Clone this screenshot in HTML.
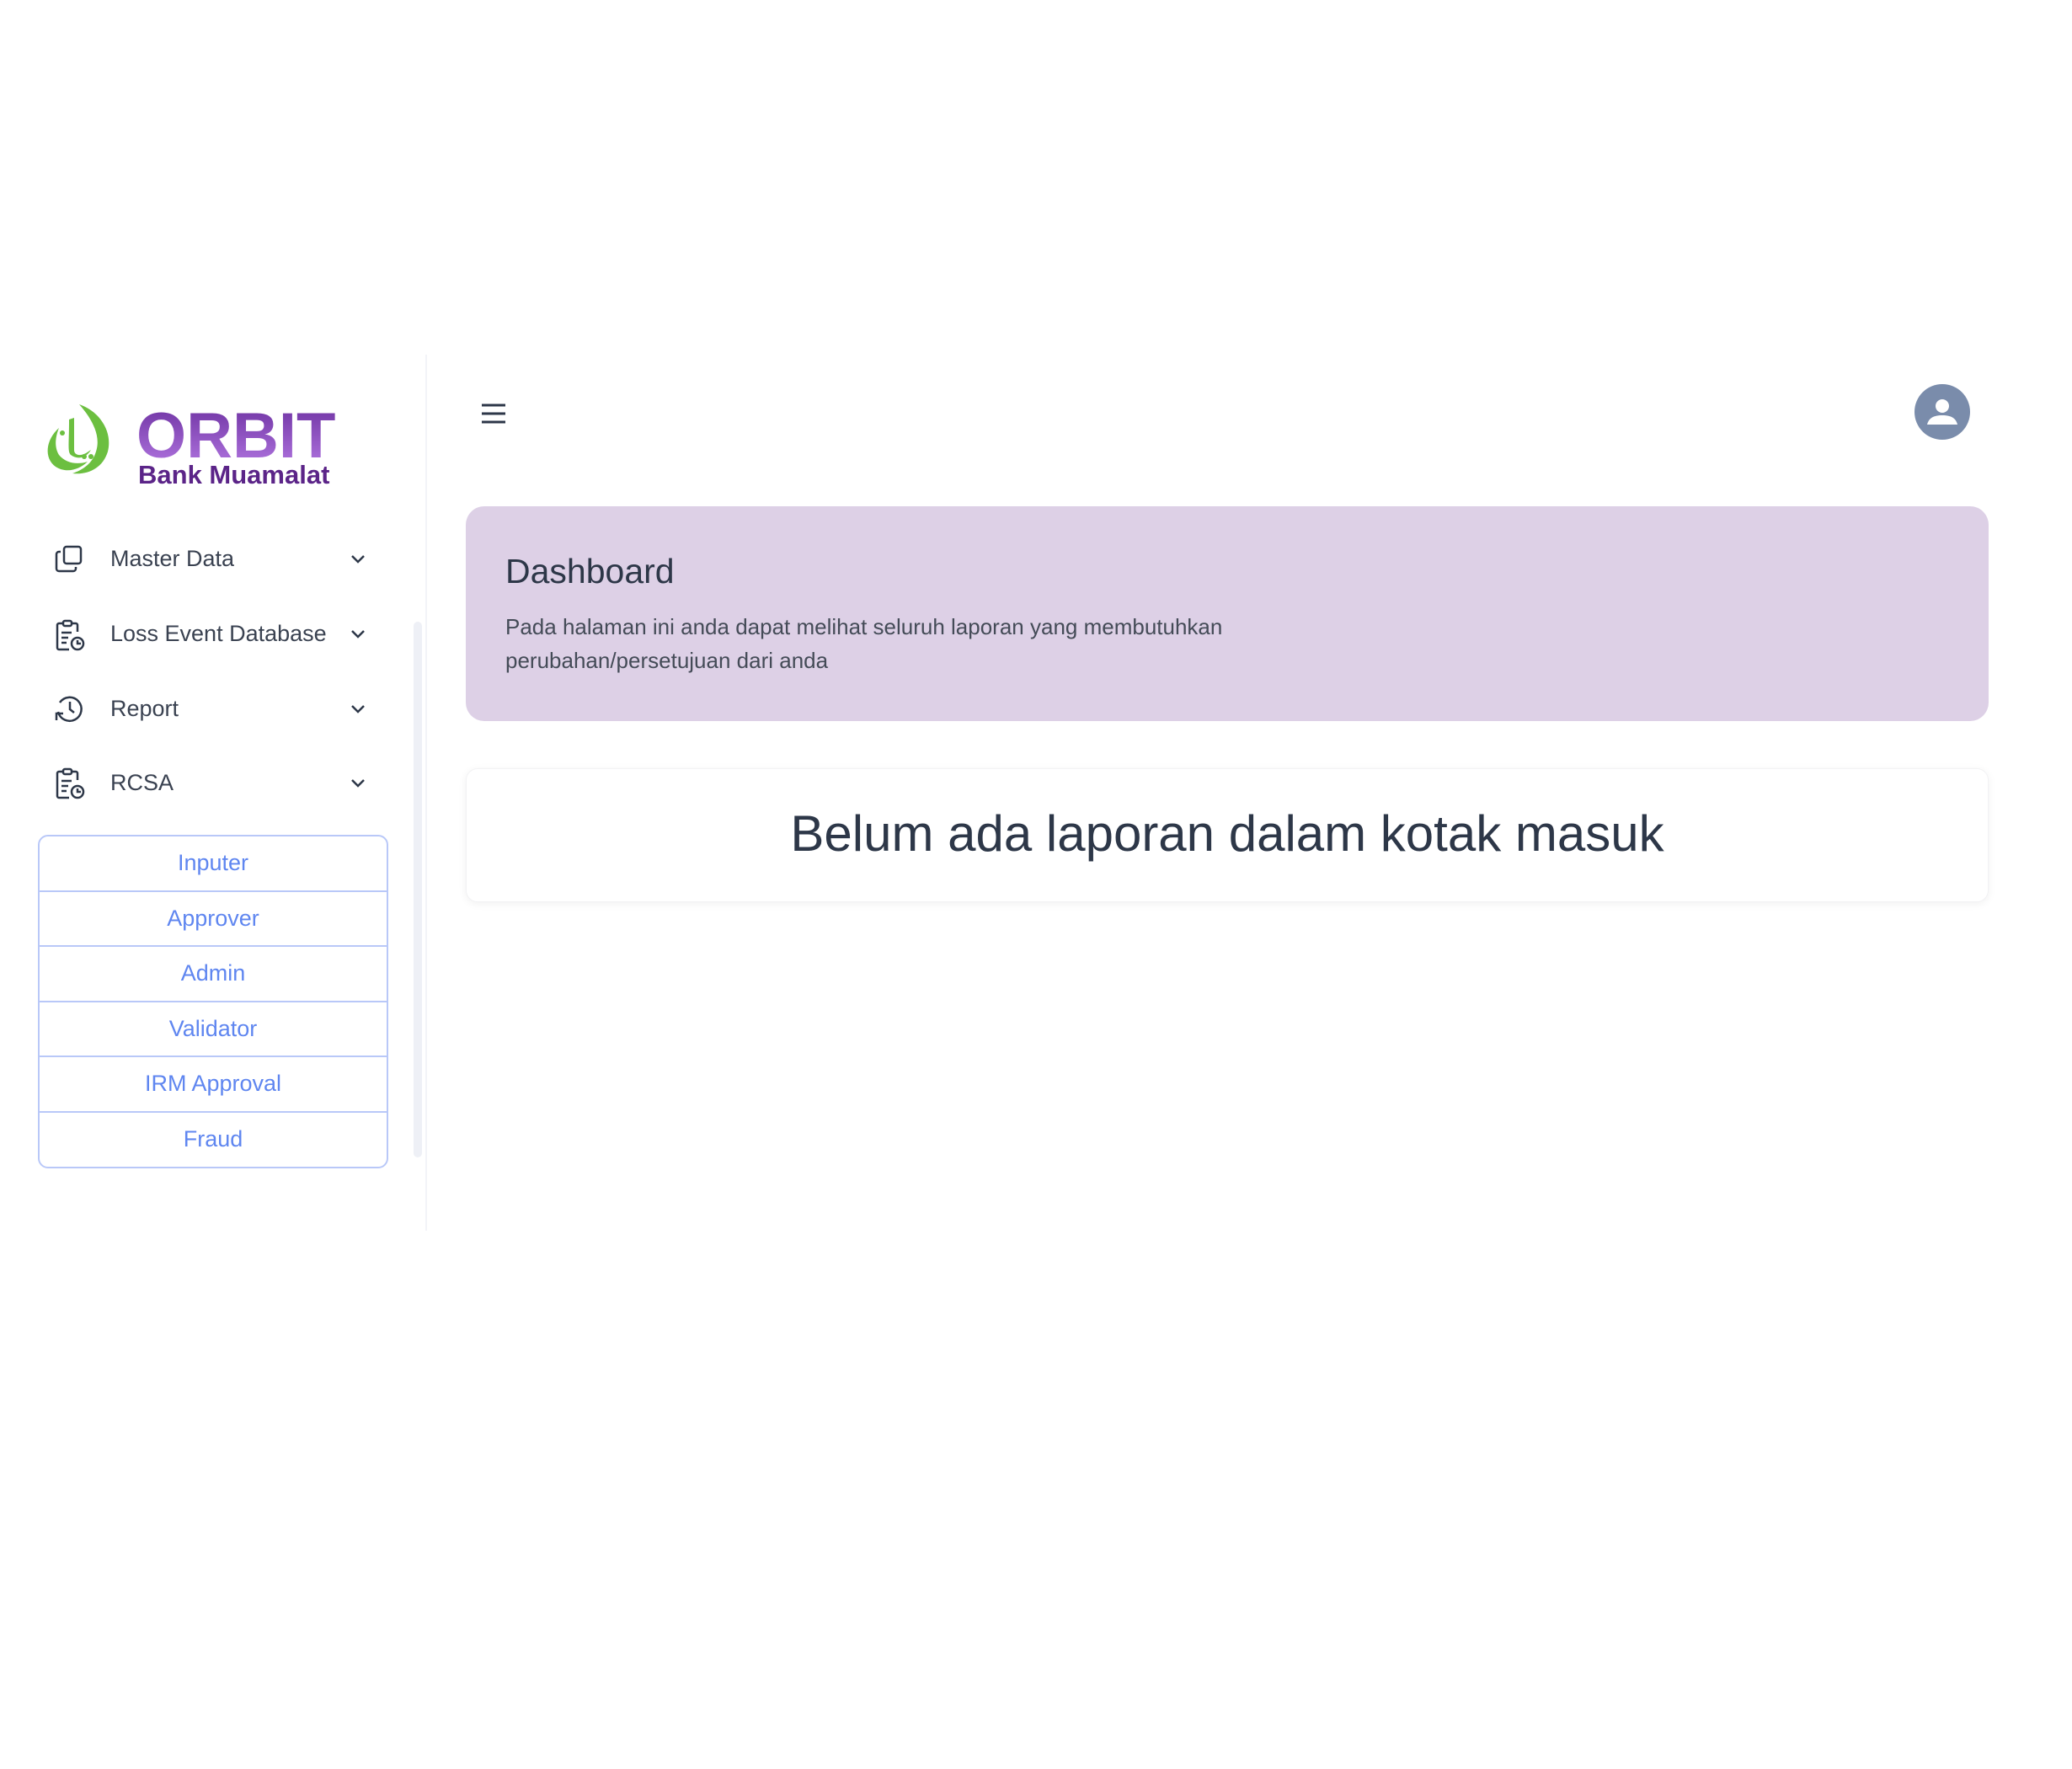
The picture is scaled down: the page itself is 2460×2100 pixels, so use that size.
<!DOCTYPE html>
<html><head><meta charset="utf-8"><style>
*{margin:0;padding:0;box-sizing:border-box}
body{width:2460px;height:2100px;background:#fff;font-family:"Liberation Sans",sans-serif;position:relative;overflow:hidden;color:#2d3748}
.abs{position:absolute}
.side-line{left:505px;top:421px;width:2px;height:1040px;background:#f3f4f8}
.scroll{left:491px;top:738px;width:10px;height:636px;background:#eef0f6;border-radius:5px}
.orbit{left:162px;top:474px;font-size:76px;font-weight:bold;letter-spacing:0px;background:linear-gradient(#6a2e9e,#b57ae4);-webkit-background-clip:text;color:transparent}
.bm{left:164px;top:546px;font-size:31px;font-weight:bold;color:#5b2488}
.mi{left:131px;font-size:27px;color:#3a4251}
.chev{left:414px}
.ico{left:64px}
.list{left:45px;top:991px;width:416px;height:396px;border:2px solid #b9c8f8;border-radius:12px;overflow:hidden}
.list div{height:65.5px;border-bottom:2px solid #b9c8f8;text-align:center;line-height:63px;font-size:27px;color:#5f86f0}
.list div:last-child{border-bottom:none}
.card1{left:553px;top:601px;width:1808px;height:255px;background:#ddd0e6;border-radius:22px}
.card2{left:553px;top:912px;width:1808px;height:159px;background:#fff;border-radius:14px;box-shadow:0 2px 10px rgba(0,0,0,.06);border:1px solid #f2f2f4}
</style></head><body>
<div class="abs side-line"></div>
<div class="abs scroll"></div>
<svg class="abs" style="left:48px;top:478px" width="90" height="88" viewBox="0 0 90 88">
<path d="M46 2 C70 10 86 34 80 58 C74 78 56 86 38 84 C50 80 62 72 66 58 C72 40 62 20 46 2Z" fill="#6cbf40"/>
<path d="M22 30 C6 44 4 66 18 76 C30 84 46 80 56 70 C44 74 30 72 22 62 C16 52 18 40 22 30Z" fill="#6cbf40"/>
<path d="M34 20 L40 18 L40 56 C40 62 46 64 54 60 L60 56 C54 66 44 68 36 62 C32 58 34 50 34 20Z" fill="#6cbf40"/>
<circle cx="26" cy="36" r="3" fill="#6cbf40"/><circle cx="52" cy="64" r="3" fill="#6cbf40"/><circle cx="60" cy="64" r="3" fill="#6cbf40"/>
</svg>
<div class="abs orbit">ORBIT</div>
<div class="abs bm">Bank Muamalat</div>

<svg class="abs ico" style="top:646px" width="36" height="36" viewBox="0 0 36 36" fill="none" stroke="#2d3748" stroke-width="2.5"><rect x="12" y="3" width="20" height="20" rx="3"/><path d="M8 9H6a3 3 0 0 0-3 3v17a3 3 0 0 0 3 3h17a3 3 0 0 0 3-3v-2"/></svg>
<div class="abs mi" style="top:648px">Master Data</div>
<svg class="abs ico" style="top:735px" width="38" height="38" viewBox="0 0 38 38" fill="none" stroke="#2d3748" stroke-width="2.5"><rect x="11" y="2" width="10" height="6" rx="2"/><path d="M11 5H6a2 2 0 0 0-2 2v27a2 2 0 0 0 2 2h12M21 5h5a2 2 0 0 1 2 2v8M9 16h12M9 22h8M9 28h6"/><circle cx="28" cy="29" r="7"/><path d="M28 25v4h4"/></svg>
<div class="abs mi" style="top:737px">Loss Event Database</div>
<svg class="abs ico" style="top:823px" width="38" height="38" viewBox="0 0 38 38" fill="none" stroke="#2d3748" stroke-width="2.5"><path d="M5 22A14 14 0 1 0 7 11"/><path d="M3 32v-8h8"/><path d="M19 10v9l5 4"/></svg>
<div class="abs mi" style="top:826px">Report</div>
<svg class="abs ico" style="top:911px" width="38" height="38" viewBox="0 0 38 38" fill="none" stroke="#2d3748" stroke-width="2.5"><rect x="11" y="2" width="10" height="6" rx="2"/><path d="M11 5H6a2 2 0 0 0-2 2v27a2 2 0 0 0 2 2h12M21 5h5a2 2 0 0 1 2 2v8M9 16h12M9 22h8M9 28h6"/><circle cx="28" cy="29" r="7"/><path d="M28 25v4h4"/></svg>
<div class="abs mi" style="top:914px">RCSA</div>

<svg class="abs chev" style="top:653px" width="22" height="22" viewBox="0 0 22 22" fill="none" stroke="#2d3748" stroke-width="2.5"><path d="M4 7l7 7 7-7"/></svg>
<svg class="abs chev" style="top:742px" width="22" height="22" viewBox="0 0 22 22" fill="none" stroke="#2d3748" stroke-width="2.5"><path d="M4 7l7 7 7-7"/></svg>
<svg class="abs chev" style="top:831px" width="22" height="22" viewBox="0 0 22 22" fill="none" stroke="#2d3748" stroke-width="2.5"><path d="M4 7l7 7 7-7"/></svg>
<svg class="abs chev" style="top:919px" width="22" height="22" viewBox="0 0 22 22" fill="none" stroke="#2d3748" stroke-width="2.5"><path d="M4 7l7 7 7-7"/></svg>

<div class="abs list"><div>Inputer</div><div>Approver</div><div>Admin</div><div>Validator</div><div>IRM Approval</div><div>Fraud</div></div>

<svg class="abs" style="left:570px;top:477px" width="32" height="28" viewBox="0 0 32 28" stroke="#2d3748" stroke-width="3"><path d="M2 4h28M2 14h28M2 24h28"/></svg>
<svg class="abs" style="left:2273px;top:456px" width="66" height="66" viewBox="0 0 66 66"><circle cx="33" cy="33" r="33" fill="#7a8cab"/><circle cx="33" cy="26" r="8" fill="#fff"/><path d="M15 48c2-8 8-11 18-11s16 3 18 11z" fill="#fff"/></svg>

<div class="abs card1">
<div class="abs" style="left:47px;top:54px;font-size:41px;color:#2d3748">Dashboard</div>
<div class="abs" style="left:47px;top:123px;font-size:26px;line-height:40px;color:#444b57;width:1000px">Pada halaman ini anda dapat melihat seluruh laporan yang membutuhkan<br>perubahan/persetujuan dari anda</div>
</div>
<div class="abs card2"><div style="text-align:center;line-height:154px;font-size:60px;color:#2d3748">Belum ada laporan dalam kotak masuk</div></div>
</body></html>
